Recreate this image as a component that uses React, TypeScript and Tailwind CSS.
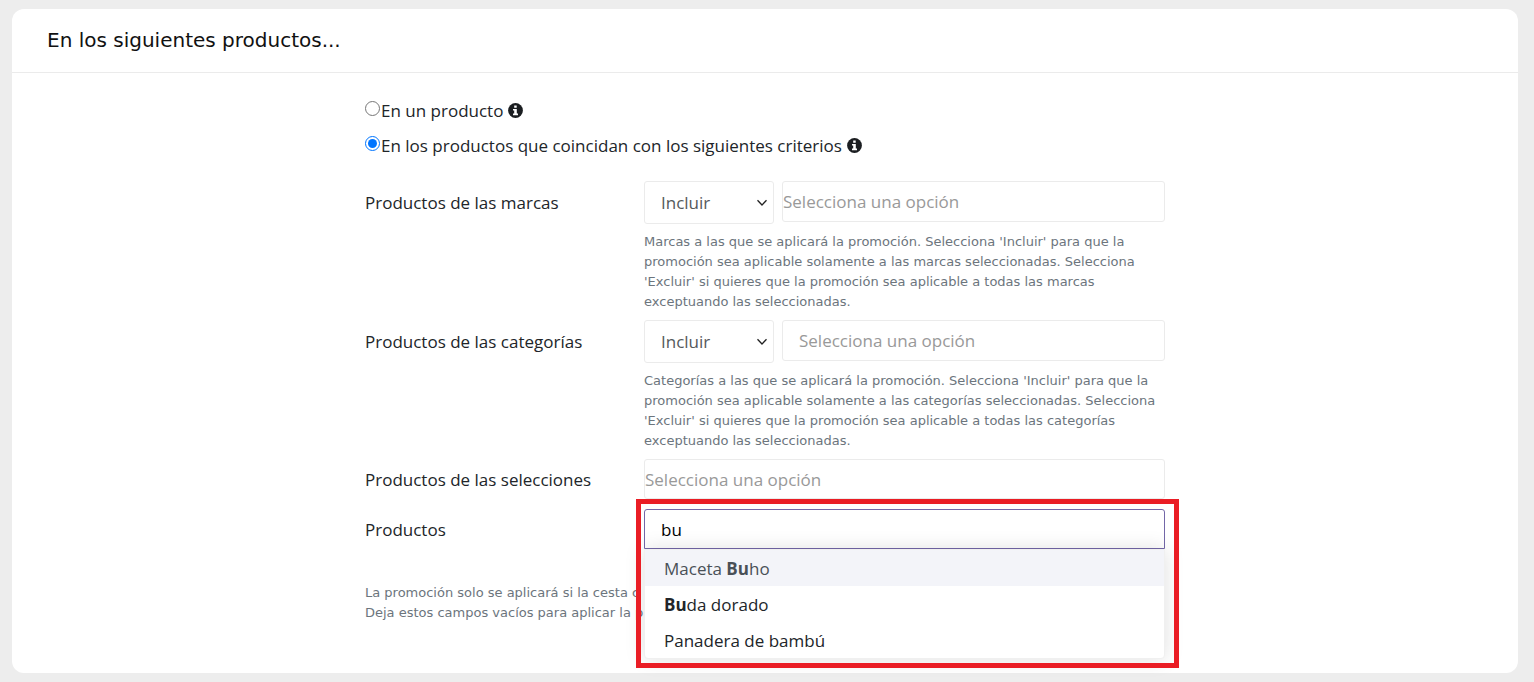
import { useState } from "react";

const OPTIONS = [
  { id: 1, before: "Maceta ", match: "Bu", after: "ho" },
  { id: 2, before: "", match: "Bu", after: "da dorado" },
  { id: 3, before: "Panadera de bambú", match: "", after: "" },
];

const inputBase =
  "w-full rounded-[3px] border border-[#ebebeb] bg-white outline-none placeholder:text-[#999999]";
const helpText = "font-['Verdana','DejaVu_Sans',sans-serif] text-[13px] leading-5 text-[#6c757d]";

function InfoIcon() {
  return (
    <svg viewBox="0 0 15 15" className="h-[15px] w-[15px]" aria-hidden="true">
      <circle cx="7.5" cy="7.5" r="7.4" fill="#1b1e21" />
      <path
        fill="#fff"
        d="M6.200 2.600h2.500v2.200H6.200zM5 5.900h3.800v4.700H10v1.700H5v-1.700h1.200V7.600H5z"
      />
    </svg>
  );
}

interface CriteriaRowProps {
  id: string;
  label: string;
  help: string;
  inputClass: string;
}

function CriteriaRow({ id, label, help, inputClass }: CriteriaRowProps) {
  return (
    <div className="flex pb-2">
      <label htmlFor={id} className="h-[43px] w-[279px] shrink-0 leading-[43px]">
        {label}
      </label>
      <div className="min-w-0 flex-1">
        <div className="flex gap-2">
          <div className="relative w-[130px] shrink-0">
            <select
              aria-label={`${label}: modo`}
              className="h-[43px] w-full appearance-none rounded-[3px] border border-[#ebebeb] bg-white pl-4 text-[#55595c] outline-none"
            >
              <option>Incluir</option>
              <option>Excluir</option>
            </select>
            <svg
              viewBox="0 0 12 8"
              className="pointer-events-none absolute top-[18px] right-[6px] h-2 w-3"
              fill="none"
              stroke="#222"
              strokeWidth="1.3"
            >
              <path d="M1.5 1.2 6 6l4.500-4.800" />
            </svg>
          </div>
          <input
            id={id}
            type="text"
            placeholder="Selecciona una opción"
            className={`${inputBase} h-[41px] ${inputClass}`}
          />
        </div>
        <p className={`mt-2 ${helpText}`}>{help}</p>
      </div>
    </div>
  );
}

export default function App() {
  const [mode, setMode] = useState("criteria");
  const [query, setQuery] = useState("bu");

  return (
    <div className="min-h-screen bg-[#ededed] px-3 pt-[9px] pr-4 pb-[9px] font-['Open_Sans',sans-serif] text-[17px] text-[#212529]">
      <section className="rounded-xl bg-white pb-[50px]">
        <header className="border-b border-[#ebebeb] px-[35px] py-4">
          <h2 className="font-['Verdana','DejaVu_Sans',sans-serif] text-[20px] leading-[31px] text-[#111]">
            En los siguientes productos...
          </h2>
        </header>

        <div className="mx-auto max-w-[800px] pt-5">
          <div className="flex h-[35px] items-center">
            <input
              id="single"
              type="radio"
              name="mode"
              checked={mode === "single"}
              onChange={() => setMode("single")}
              className="mb-1 h-[15px] w-[15px]"
            />
            <label htmlFor="single" className="ml-px flex items-center gap-[5px]">
              En un producto <InfoIcon />
            </label>
          </div>
          <div className="flex h-[35px] items-center">
            <input
              id="criteria"
              type="radio"
              name="mode"
              checked={mode === "criteria"}
              onChange={() => setMode("criteria")}
              className="mb-1 h-[15px] w-[15px]"
            />
            <label htmlFor="criteria" className="ml-px flex items-center gap-[5px]">
              En los productos que coincidan con los siguientes criterios <InfoIcon />
            </label>
          </div>

          <div className="pt-[18px]">
            <CriteriaRow
              id="brands"
              label="Productos de las marcas"
              help="Marcas a las que se aplicará la promoción. Selecciona 'Incluir' para que la promoción sea aplicable solamente a las marcas seleccionadas. Selecciona 'Excluir' si quieres que la promoción sea aplicable a todas las marcas exceptuando las seleccionadas."
              inputClass="pl-0"
            />
            <CriteriaRow
              id="categories"
              label="Productos de las categorías"
              help="Categorías a las que se aplicará la promoción. Selecciona 'Incluir' para que la promoción sea aplicable solamente a las categorías seleccionadas. Selecciona 'Excluir' si quieres que la promoción sea aplicable a todas las categorías exceptuando las seleccionadas."
              inputClass="pl-4"
            />

            <div className="flex pb-[10px]">
              <label htmlFor="selections" className="h-10 w-[279px] shrink-0 leading-[42px]">
                Productos de las selecciones
              </label>
              <input
                id="selections"
                type="text"
                placeholder="Selecciona una opción"
                className={`${inputBase} h-10`}
              />
            </div>

            <div className="flex">
              <label htmlFor="products" className="h-10 w-[279px] shrink-0 leading-[42px]">
                Productos
              </label>
              <div className="relative flex-1">
                <input
                  id="products"
                  type="text"
                  value={query}
                  onChange={(e) => setQuery(e.target.value)}
                  className="h-10 w-full rounded-t-[3px] border border-[#7367a8] bg-white pl-4 text-black outline-none"
                />
                {/* Autocomplete results */}
                <ul className="absolute top-full right-0 left-0 z-10 overflow-hidden rounded-b-[4px] border border-[#f0f0f0] bg-white shadow-[0_0_20px_rgba(0,0,0,0.13)]">
                  {OPTIONS.map((option, i) => (
                    <li
                      key={option.id}
                      className={`h-9 pl-[19px] leading-[38px] ${i === 0 ? "bg-[#f3f4f9] text-[#495057]" : ""}`}
                    >
                      {option.before}
                      <b>{option.match}</b>
                      {option.after}
                    </li>
                  ))}
                </ul>
                {/* Highlight frame */}
                <div className="pointer-events-none absolute -top-[10px] -right-[14px] -left-2 z-20 h-[169px] border-[5px] border-[#ea1d25]" />
              </div>
            </div>
          </div>

          <p className={`mt-[34px] w-[279px] overflow-hidden whitespace-nowrap ${helpText}`}>
            La promoción solo se aplicará si la cesta c
            <br />
            Deja estos campos vacíos para aplicar la p
          </p>
        </div>
      </section>
    </div>
  );
}
